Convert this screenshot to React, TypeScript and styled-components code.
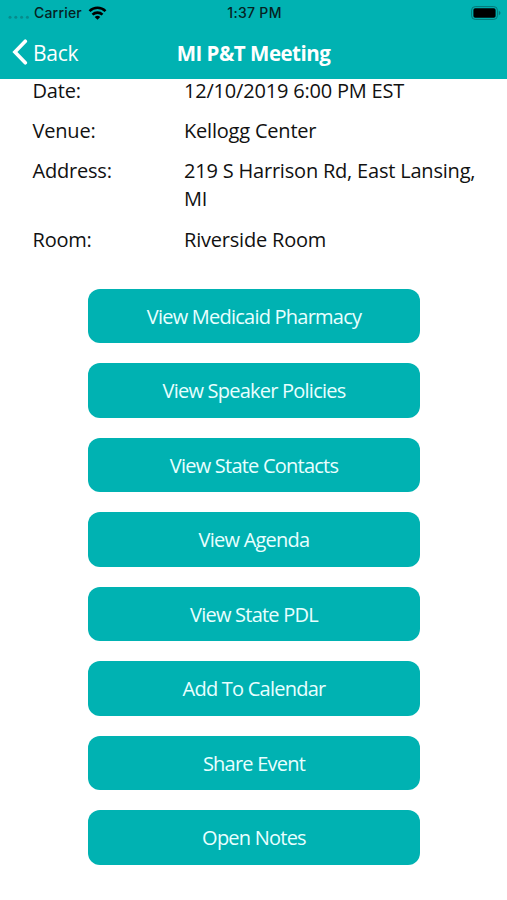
import React from "react";
import styled, { createGlobalStyle } from "styled-components";

const Global = createGlobalStyle`
  * { box-sizing: border-box; }
  body { margin: 0; background: #fff; font-family: "Open Sans", sans-serif; }
`;

const Screen = styled.main`
  width: 507px;
  height: 900px;
  overflow: hidden;
  background: #fff;
  display: flex;
  flex-direction: column;
`;

const Header = styled.header`
  flex: none;
  height: 79px;
  background: #00b2b2;
`;

const StatusBar = styled.div`
  height: 26px;
  padding: 0 6px 0 8px;
  display: grid;
  grid-template-columns: 1fr auto 1fr;
  align-items: center;
  font-family: Inter, sans-serif;
  font-size: 14px;
  line-height: 16px;
  font-weight: 500;
  color: #062222;
`;

const Carrier = styled.div`
  display: flex;
  align-items: center;
`;

const CarrierName = styled.span`
  margin: 0 6px 0 4px;
  letter-spacing: 0.2px;
`;

const Time = styled.span`
  letter-spacing: 0.3px;
`;

const BatteryIcon = styled.svg`
  justify-self: end;
`;

const NavBar = styled.nav`
  height: 52px;
  padding: 0 12px;
  display: grid;
  grid-template-columns: 1fr auto 1fr;
  align-items: center;
  color: #fff;
`;

const BackButton = styled.button`
  border: 0;
  padding: 0;
  background: none;
  color: inherit;
  font: 400 21px/28px "Open Sans", sans-serif;
  letter-spacing: -0.3px;
  display: flex;
  align-items: center;
  gap: 5px;
`;

const BackLabel = styled.span`
  padding-top: 2px;
`;

const Title = styled.h1`
  margin: 0;
  padding-top: 2px;
  font-size: 20.5px;
  line-height: 28px;
  font-weight: 700;
  letter-spacing: -0.5px;
`;

const Details = styled.dl`
  margin: -2.4px 0 0;
  padding: 0 20px 0 32.5px;
  display: grid;
  grid-template-columns: 151.5px 1fr;
  row-gap: 12.4px;
  font-size: 20px;
  line-height: 28px;
  letter-spacing: -0.2px;
  color: #111;
`;

const Label = styled.dt``;

const Value = styled.dd`
  margin: 0;
`;

const Actions = styled.div`
  margin: 35.2px 87px 0 88px;
  display: flex;
  flex-direction: column;
  gap: 20.1px;
`;

const ActionButton = styled.button`
  height: 54.4px;
  border: 0;
  border-radius: 12px;
  background: #00b2b2;
  color: #e8ffff;
  font: 400 20px "Open Sans", sans-serif;
  letter-spacing: -0.77px;
`;

const details = [
  ["Date:", "12/10/2019 6:00 PM EST"],
  ["Venue:", "Kellogg Center"],
  ["Address:", "219 S Harrison Rd, East Lansing, MI"],
  ["Room:", "Riverside Room"],
];

const actions = [
  "View Medicaid Pharmacy",
  "View Speaker Policies",
  "View State Contacts",
  "View Agenda",
  "View State PDL",
  "Add To Calendar",
  "Share Event",
  "Open Notes",
];

export default function App() {
  return (
    <>
      <Global />
      <Screen>
        <Header>
          <StatusBar>
            <Carrier>
              <svg width="22" height="14" viewBox="0 0 22 14" fill="#078b8c">
                <circle cx="2" cy="11.3" r="1.5" />
                <circle cx="7.8" cy="11.3" r="1.5" />
                <circle cx="13.6" cy="11.3" r="1.5" />
                <circle cx="19.4" cy="11.3" r="1.5" />
              </svg>
              <CarrierName>Carrier</CarrierName>
              <svg width="19" height="14" viewBox="0 0 18 14" fill="none" stroke="#000" strokeWidth="2.6">
                <path d="M1 5.1a11.4 11.4 0 0 1 16 0" />
                <path d="M4 8.6a7.2 7.2 0 0 1 10 0" />
                <path d="M9 13.8 6.2 11a4 4 0 0 1 5.6 0Z" fill="#000" stroke="none" />
              </svg>
            </Carrier>
            <Time>1:37 PM</Time>
            <BatteryIcon width="30" height="14" viewBox="0 0 30 14">
              <rect x=".6" y=".6" width="25.8" height="12.8" rx="3.6" fill="none" stroke="#047777" />
              <rect x="2.4" y="2.2" width="22.2" height="9.6" rx="1.8" />
              <path d="M27.8 4.8q1.7.8 1.7 2.2t-1.7 2.2Z" fill="#047777" />
            </BatteryIcon>
          </StatusBar>
          <NavBar>
            <BackButton>
              <svg width="16" height="26" viewBox="0 0 16 26" fill="none" stroke="#fff" strokeWidth="3.6" strokeLinecap="round">
                <path d="M13.3 2.2 2.9 13l10.4 10.8" />
              </svg>
              <BackLabel>Back</BackLabel>
            </BackButton>
            <Title>MI P&amp;T Meeting</Title>
          </NavBar>
        </Header>
        <Details>
          {details.map(([label, value]) => (
            <React.Fragment key={label}>
              <Label>{label}</Label>
              <Value>{value}</Value>
            </React.Fragment>
          ))}
        </Details>
        <Actions>
          {actions.map((name) => (
            <ActionButton key={name}>{name}</ActionButton>
          ))}
        </Actions>
      </Screen>
    </>
  );
}
